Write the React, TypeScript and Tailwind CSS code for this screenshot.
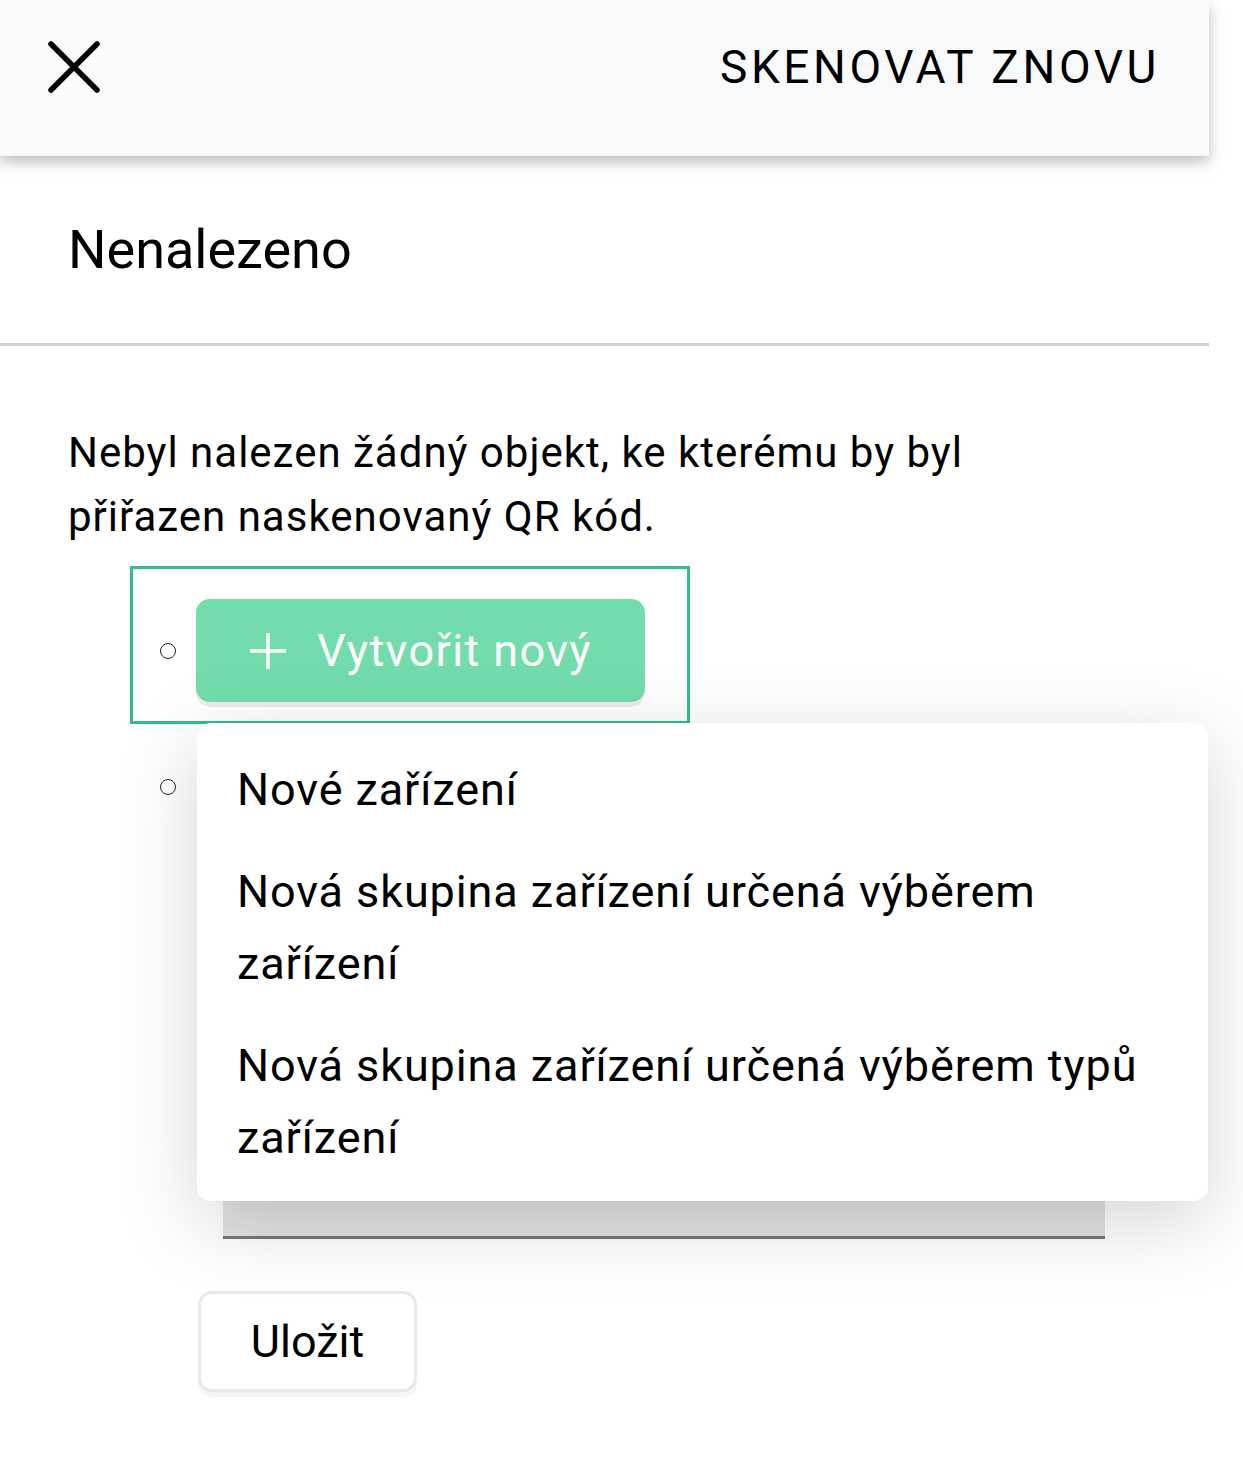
import React from 'react';

const menuItems = [
  'Nové zařízení',
  'Nová skupina zařízení určená výběrem zařízení',
  'Nová skupina zařízení určená výběrem typů zařízení',
];

const Bullet: React.FC = () => (
  <span className="block w-[16px] h-[16px] rounded-full border-[1.5px] border-[#222] shrink-0" />
);

const App: React.FC = () => {
  return (
    <div className="w-[1209px] min-h-[1464px] bg-white text-black font-['Roboto',sans-serif]">
      {/* header */}
      <header className="relative z-10 h-[156px] bg-[#f8f9fb] flex items-center justify-between pl-[48px] pr-[49px] pb-[22px] shadow-[0_6px_14px_rgba(0,0,0,0.26)]">
        <button className="w-[52px] h-[52px] flex items-center justify-center">
          <svg viewBox="0 0 52 52" className="w-[52px] h-[52px]">
            <path d="M3 3 L49 49 M49 3 L3 49" stroke="#000" strokeWidth="5.5" strokeLinecap="round" />
          </svg>
        </button>
        <span className="text-[46px] tracking-[3.6px] leading-none">SKENOVAT ZNOVU</span>
      </header>

      <div className="h-[187px] flex items-center px-[68px]">
        <h1 className="text-[54px] leading-none">Nenalezeno</h1>
      </div>
      <div className="h-[3px] bg-[#cfcfd4]" />

      <div className="px-[68px] pt-[75px]">
        <p className="text-[42px] leading-[64px] tracking-[1px] max-w-[960px]">
          Nebyl nalezen žádný objekt, ke kterému by byl přiřazen naskenovaný QR kód.
        </p>
      </div>

      <div className="relative mt-[17px]">
        {/* first item, focused */}
        <div className="ml-[130px] w-[560px] h-[158px] border-[3px] border-[#33bd8b] flex items-start pl-[27px] pt-[30px] gap-[20px]">
          <div className="h-[103px] flex items-center"><Bullet /></div>
          <button className="w-[449px] h-[103px] rounded-[14px] bg-[#72dcaa] text-white flex items-center justify-center gap-[30px] shadow-[0_5px_0_rgba(0,0,0,0.07)]">
            <svg viewBox="0 0 38 38" className="w-[38px] h-[38px]">
              <path d="M19 1 V37 M1 19 H37" stroke="#fff" strokeWidth="3.5" />
            </svg>
            <span className="text-[45px] leading-none tracking-[1.4px]">Vytvořit nový</span>
          </button>
        </div>

        {/* second item, under the menu */}
        <div className="pl-[160px] pt-[55px] flex items-start">
          <Bullet />
        </div>
        <div className="ml-[223px] mt-[364px] w-[882px] h-[80px] bg-[#e3e3e3] border-b-[3px] border-[#777]" />

        <div className="pl-[198px] pt-[52px] pb-[70px]">
          <button className="w-[219px] h-[101px] rounded-[14px] border-[3px] border-[#e9e9ec] bg-white text-[45px] shadow-[0_5px_0_rgba(0,0,0,0.04)]">
            Uložit
          </button>
        </div>

        {/* dropdown menu */}
        <div className="absolute left-[197px] top-[157px] w-[1011px] bg-white rounded-[14px] pt-[16px] pb-[12px] shadow-[0_20px_80px_rgba(0,0,0,0.17)]">
          {menuItems.map((item) => (
            <div key={item} className="px-[40px] py-[15px] text-[45px] leading-[72px] tracking-[0.9px]">
              {item}
            </div>
          ))}
        </div>
      </div>
    </div>
  );
};

export default App;
